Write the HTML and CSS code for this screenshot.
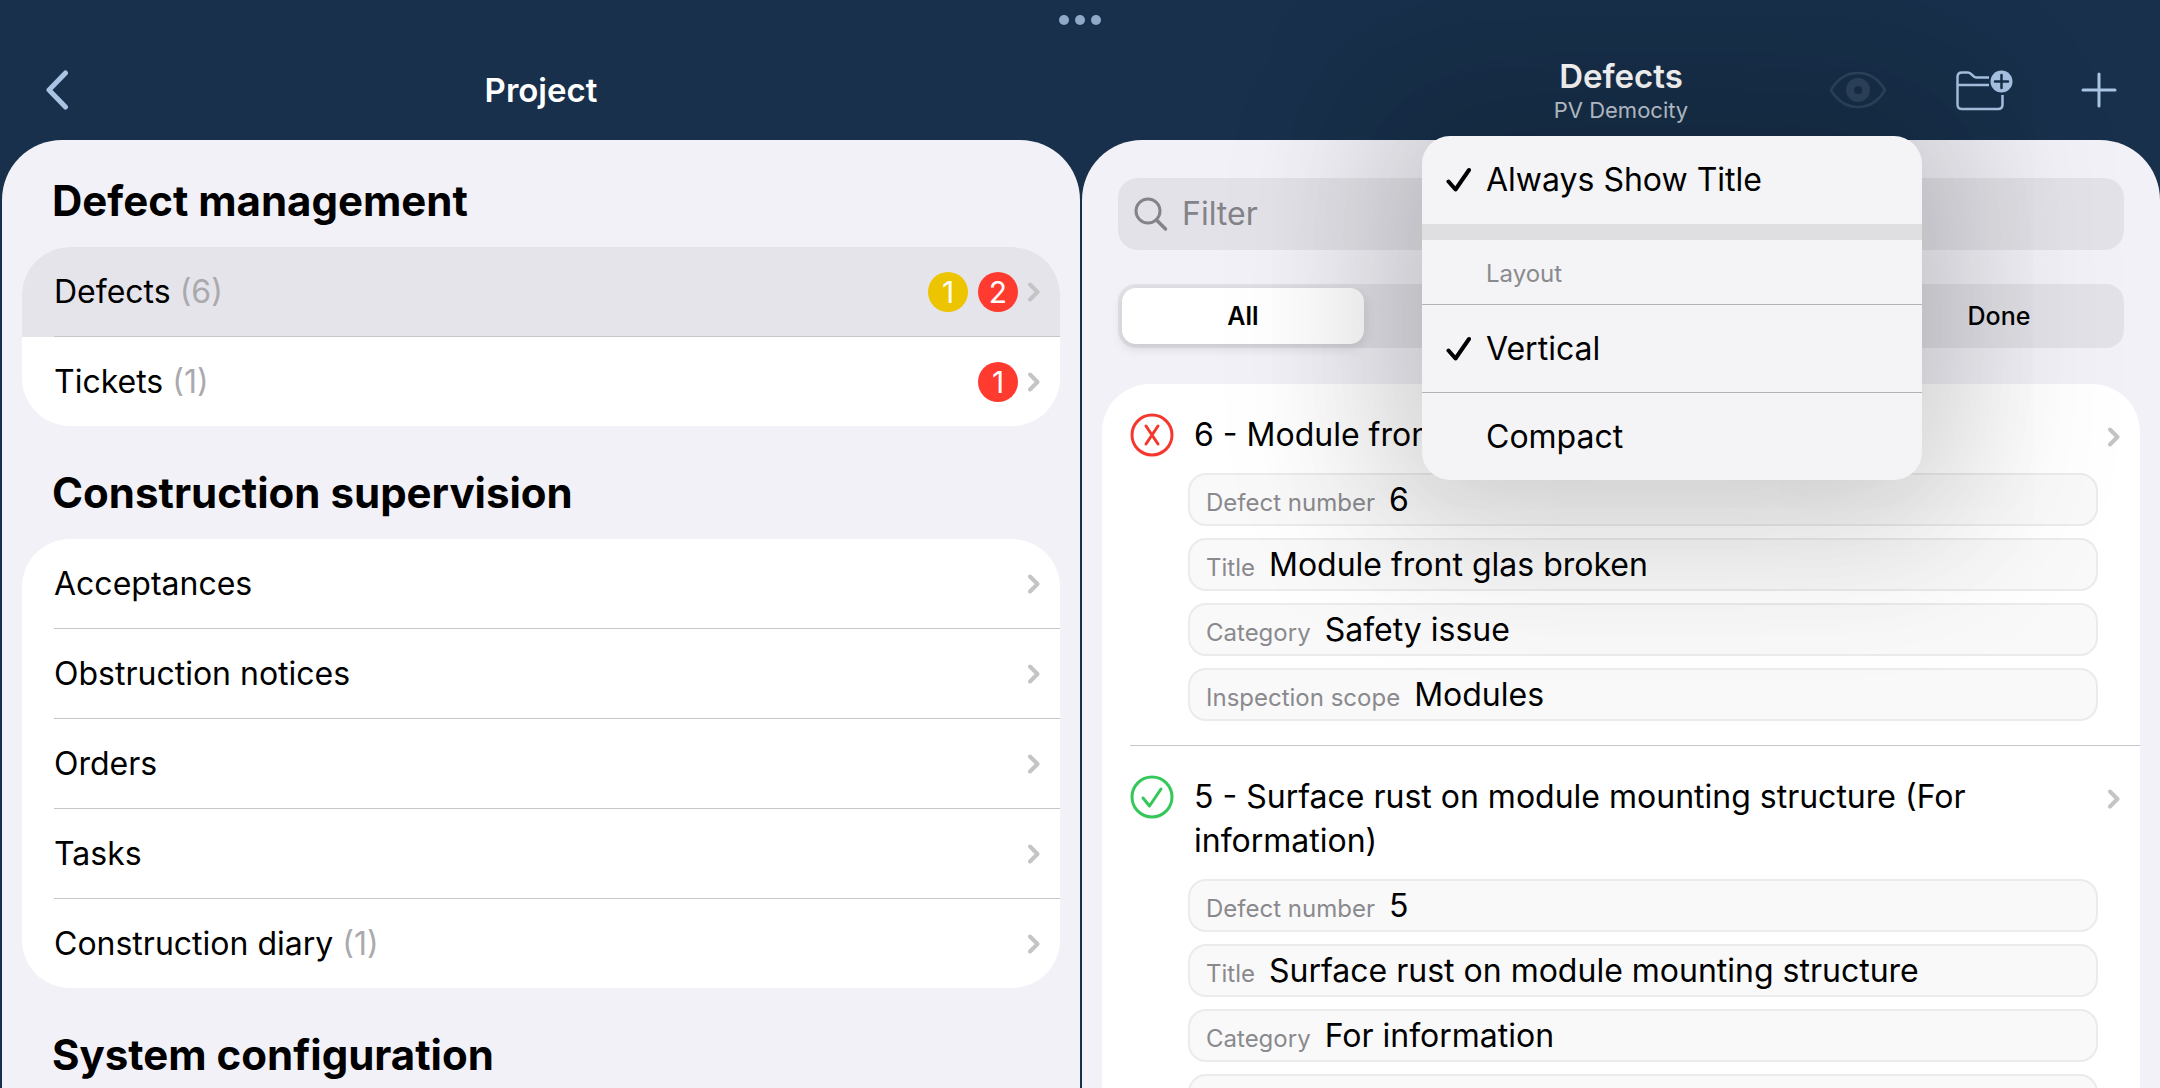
FILE: index.html
```html
<!DOCTYPE html>
<html lang="en">
<head>
    <meta charset="UTF-8">
    <meta name="viewport" content="width=device-width, initial-scale=1.0">
    <title>Project - Defects</title>
    <link rel="stylesheet" href="styles.css">
</head>
<body>
    <!-- Shared icons -->
    <svg class="icon-defs" aria-hidden="true">
        <symbol id="chevron" viewBox="0 0 12 20">
            <path d="M2 2.5 L9.5 10 L2 17.5" fill="none" stroke="currentColor" stroke-width="4" stroke-linecap="round" stroke-linejoin="round"/>
        </symbol>
        <symbol id="check" viewBox="0 0 26 26">
            <path d="M2.5 14.5 L9.5 22.5 L23 3" fill="none" stroke="currentColor" stroke-width="4" stroke-linecap="round" stroke-linejoin="round"/>
        </symbol>
    </svg>

    <div class="window-dots"><span></span><span></span><span></span></div>

    <div class="app">
        <!-- Project pane -->
        <section class="pane">
            <header class="pane-header">
                <div class="header-side">
                    <button class="icon-btn" aria-label="Back">
                        <svg width="24" height="40" viewBox="0 0 24 40"><path d="M20.500 3 L4 20 L20.500 37" fill="none" stroke="currentColor" stroke-width="5" stroke-linecap="round" stroke-linejoin="round"/></svg>
                    </button>
                </div>
                <h1 class="pane-title">Project</h1>
                <div class="header-side"></div>
            </header>

            <div class="pane-body">
                <h2 class="group-title">Defect management</h2>
                <nav class="list">
                    <a href="#" class="list-row active">
                        <span class="row-label">Defects <span class="count">(6)</span></span>
                        <span class="badge badge-yellow">1</span>
                        <span class="badge badge-red">2</span>
                        <svg class="chevron"><use href="#chevron"/></svg>
                    </a>
                    <a href="#" class="list-row">
                        <span class="row-label">Tickets <span class="count">(1)</span></span>
                        <span class="badge badge-red">1</span>
                        <svg class="chevron"><use href="#chevron"/></svg>
                    </a>
                </nav>

                <h2 class="group-title">Construction supervision</h2>
                <nav class="list">
                    <a href="#" class="list-row">
                        <span class="row-label">Acceptances</span>
                        <svg class="chevron"><use href="#chevron"/></svg>
                    </a>
                    <a href="#" class="list-row">
                        <span class="row-label">Obstruction notices</span>
                        <svg class="chevron"><use href="#chevron"/></svg>
                    </a>
                    <a href="#" class="list-row">
                        <span class="row-label">Orders</span>
                        <svg class="chevron"><use href="#chevron"/></svg>
                    </a>
                    <a href="#" class="list-row">
                        <span class="row-label">Tasks</span>
                        <svg class="chevron"><use href="#chevron"/></svg>
                    </a>
                    <a href="#" class="list-row">
                        <span class="row-label">Construction diary <span class="count">(1)</span></span>
                        <svg class="chevron"><use href="#chevron"/></svg>
                    </a>
                </nav>

                <h2 class="group-title">System configuration</h2>
            </div>
        </section>

        <!-- Defects pane -->
        <section class="pane">
            <header class="pane-header">
                <div class="header-side"></div>
                <button class="title-btn" aria-haspopup="menu" aria-expanded="true">
                    <span class="pane-title">Defects</span>
                    <span class="pane-subtitle">PV Democity</span>
                </button>
                <div class="header-side header-actions">
                    <button class="icon-btn" aria-label="Visibility" disabled>
                        <svg width="58" height="38" viewBox="0 0 58 38">
                            <path d="M2 19 C9 7 19 2 29 2 C39 2 49 7 56 19 C49 31 39 36 29 36 C19 36 9 31 2 19 Z" fill="none" stroke="currentColor" stroke-width="2.500" stroke-linejoin="round"/>
                            <circle cx="29" cy="19" r="8" fill="none" stroke="currentColor" stroke-width="8"/>
                        </svg>
                    </button>
                    <button class="icon-btn" aria-label="Add folder">
                        <svg width="58" height="42" viewBox="0 0 58 42">
                            <path d="M34 8.500 H21 C18 8.500 16.500 3.500 13 3.500 H7 Q2.500 3.500 2.500 8 V35.500 Q2.500 40 7 40 H43 Q47.500 40 47.500 35.500 V26 M2.500 16 H34" fill="none" stroke="currentColor" stroke-width="2.500"/>
                            <circle cx="46.500" cy="12.500" r="11" fill="currentColor"/>
                            <path d="M40 12.500 H53 M46.500 6 V19" stroke="#182f4a" stroke-width="2.500" stroke-linecap="round"/>
                        </svg>
                    </button>
                    <button class="icon-btn" aria-label="Add defect">
                        <svg width="36" height="36" viewBox="0 0 36 36"><path d="M2 18 H34 M18 2 V34" stroke="currentColor" stroke-width="3" stroke-linecap="round"/></svg>
                    </button>
                </div>
            </header>

            <div class="pane-body">
                <div class="toolbar">
                    <label class="search">
                        <svg width="34" height="36" viewBox="0 0 34 36"><circle cx="14" cy="15" r="12" fill="none" stroke="currentColor" stroke-width="3"/><path d="M22.500 24 L31.500 33" stroke="currentColor" stroke-width="3.500" stroke-linecap="round"/></svg>
                        <input type="text" placeholder="Filter" aria-label="Filter">
                    </label>

                    <div class="segments" role="radiogroup" aria-label="State">
                        <label class="segment"><input type="radio" name="state" checked><span>All</span></label>
                        <label class="segment segment-last"><input type="radio" name="state"><span>Done</span></label>
                    </div>
                </div>

                <div class="list">
                    <article class="defect">
                        <svg class="state state-open" viewBox="0 0 44 44"><circle cx="22" cy="22" r="20"/><path d="M16 13 L28 31 M28 13 L16 31"/></svg>
                        <a href="#" class="defect-title">6 - Module front glas broken (Safety issue)</a>
                        <svg class="chevron"><use href="#chevron"/></svg>
                        <dl class="fields">
                            <div class="field"><dt>Defect number</dt><dd>6</dd></div>
                            <div class="field"><dt>Title</dt><dd>Module front glas broken</dd></div>
                            <div class="field"><dt>Category</dt><dd>Safety issue</dd></div>
                            <div class="field"><dt>Inspection scope</dt><dd>Modules</dd></div>
                        </dl>
                    </article>
                    <article class="defect">
                        <svg class="state state-done" viewBox="0 0 44 44"><circle cx="22" cy="22" r="20"/><path d="M13 23 L19.500 31 L31 14"/></svg>
                        <a href="#" class="defect-title">5 - Surface rust on module mounting structure (For information)</a>
                        <svg class="chevron"><use href="#chevron"/></svg>
                        <dl class="fields">
                            <div class="field"><dt>Defect number</dt><dd>5</dd></div>
                            <div class="field"><dt>Title</dt><dd>Surface rust on module mounting structure</dd></div>
                            <div class="field"><dt>Category</dt><dd>For information</dd></div>
                            <div class="field"><dt>Inspection scope</dt><dd>Substructure</dd></div>
                        </dl>
                    </article>
                </div>
            </div>

            <!-- Title menu -->
            <div class="menu" role="menu">
                <button class="menu-item" role="menuitemcheckbox" aria-checked="true"><svg><use href="#check"/></svg>Always Show Title</button>
                <div class="menu-gap"></div>
                <div class="menu-heading">Layout</div>
                <button class="menu-item" role="menuitemradio" aria-checked="true"><svg><use href="#check"/></svg>Vertical</button>
                <button class="menu-item" role="menuitemradio" aria-checked="false"><svg></svg>Compact</button>
            </div>
        </section>
    </div>
</body>
</html>
```
FILE: styles.css
```css
* {
    margin: 0;
    padding: 0;
    box-sizing: border-box;
}

body {
    font-family: Inter, 'Liberation Sans', sans-serif;
    font-size: 32px;
    line-height: 44px;
    background: #18304b;
    color: #000000;
    overflow: hidden;
}

button, input {
    font: inherit;
    color: inherit;
    background: none;
    border: none;
}

a {
    color: inherit;
    text-decoration: none;
}

.icon-defs {
    position: absolute;
    width: 0;
    height: 0;
}

/* Multitasking dots over the header */
.window-dots {
    position: absolute;
    top: 15px;
    left: 0;
    right: 0;
    display: flex;
    justify-content: center;
    gap: 6px;
}

.window-dots span {
    width: 10px;
    height: 10px;
    border-radius: 50%;
    background: #8fa9c6;
}

.app {
    display: grid;
    grid-template-columns: 1fr 1fr;
    gap: 2px;
    height: 100vh;
    padding-left: 2px;
}

.pane {
    position: relative;
    display: flex;
    flex-direction: column;
    min-width: 0;
    min-height: 0;
}

/* Header */
.pane-header {
    display: grid;
    grid-template-columns: 1fr auto 1fr;
    align-items: center;
    height: 140px;
    padding: 40px 43px 0;
    flex-shrink: 0;
}

.header-actions {
    display: flex;
    justify-content: flex-end;
    align-items: center;
    gap: 68px;
}

.icon-btn {
    display: flex;
    color: #a9c4e4;
    cursor: pointer;
}

.icon-btn:disabled {
    color: #2f465f;
}

.pane-title {
    color: #ffffff;
    font-size: 33px;
    font-weight: 600;
    line-height: 40px;
}

.title-btn {
    display: flex;
    flex-direction: column;
    align-items: center;
    cursor: pointer;
}

.pane-subtitle {
    color: #c3ced9;
    font-size: 22px;
    line-height: 28px;
}

.pane-body {
    flex: 1;
    min-height: 0;
    overflow: hidden;
    padding: 0 20px;
    background: #f2f1f7;
    border-radius: 60px 60px 0 0;
}

/* Grouped lists */
.group-title {
    padding: 41px 30px 20px;
    font-size: 42px;
    font-weight: 700;
    line-height: 52px;
}

.group-title:first-child {
    padding-top: 35px;
}

.list {
    background: #ffffff;
    border-radius: 48px;
    overflow: hidden;
}

.list-row {
    display: flex;
    align-items: center;
    gap: 10px;
    height: 90px;
    padding-right: 20px;
    background: linear-gradient(#c6c6c8, #c6c6c8) 32px 100% / 100% 1px no-repeat;
}

.list-row:last-child {
    height: 89px;
    background: none;
}

.list-row.active {
    background-color: #e5e4ea;
}

.row-label {
    flex: 1;
    margin-left: 32px;
}

.count {
    color: #aaaaae;
}

.badge {
    width: 40px;
    height: 40px;
    border-radius: 50%;
    color: #ffffff;
    font-size: 30px;
    line-height: 40px;
    text-align: center;
}

.badge-yellow {
    background: #ecc500;
}

.badge-red {
    background: #ff3b30;
}

.chevron {
    width: 12px;
    height: 20px;
    color: #c4c4c7;
}

/* Filter and state switch */
.toolbar {
    display: flex;
    flex-direction: column;
    gap: 34px;
    padding: 38px 16px 36px;
}

.search {
    display: flex;
    align-items: center;
    gap: 14px;
    height: 72px;
    padding: 0 16px;
    border-radius: 20px;
    background: #e3e2e8;
    color: #838388;
}

.search input {
    flex: 1;
    min-width: 0;
    outline: none;
}

.search input::placeholder {
    color: #838388;
    opacity: 1;
}

.segments {
    display: grid;
    grid-template-columns: repeat(4, 1fr);
    gap: 10px;
    height: 64px;
    padding: 4px;
    border-radius: 18px;
    background: #e3e2e8;
}

.segment {
    position: relative;
    cursor: pointer;
}

.segment-last {
    grid-column: 4;
}

.segment input {
    position: absolute;
    opacity: 0;
}

.segment span {
    display: block;
    border-radius: 14px;
    font-size: 25px;
    font-weight: 500;
    line-height: 56px;
    text-align: center;
}

.segment input:checked + span {
    background: #ffffff;
    font-weight: 600;
    box-shadow: 0 4px 12px rgba(0, 0, 0, 0.12);
}

/* Defect entries */
.defect {
    display: grid;
    grid-template-columns: 44px 1fr 12px;
    column-gap: 20px;
    margin-left: 28px;
    padding: 29px 20px 24px 0;
    border-bottom: 1px solid #c6c6c8;
}

.defect-title {
    padding-right: 60px;
}

.defect .chevron {
    margin-top: 14px;
}

.state {
    width: 44px;
    height: 44px;
    fill: none;
    stroke: currentColor;
    stroke-width: 3;
    stroke-linecap: round;
    stroke-linejoin: round;
}

.state-open {
    color: #f5382e;
}

.state-done {
    color: #34c759;
}

.fields {
    grid-column: 1 / -1;
    display: flex;
    flex-direction: column;
    gap: 12px;
    margin: 16px 22px 0 58px;
}

.field {
    display: flex;
    align-items: baseline;
    gap: 14px;
    height: 53px;
    padding: 3px 16px;
    border: 2px solid #ebebec;
    border-radius: 18px;
    background: #f9f9f9;
}

.field dt {
    color: #8a8a8e;
    font-size: 24px;
}

/* Popup menu */
.menu {
    position: absolute;
    top: 136px;
    right: 238px;
    width: 500px;
    border-radius: 28px;
    background: #f4f4f6;
    overflow: hidden;
    box-shadow: 0 0 150px 10px rgba(0, 0, 0, 0.15), 0 0 150px 80px rgba(0, 0, 0, 0.08);
}

.menu-item {
    display: flex;
    align-items: center;
    gap: 14px;
    width: 100%;
    height: 88px;
    padding: 0 24px;
    text-align: left;
    cursor: pointer;
}

.menu-item svg {
    width: 26px;
    height: 26px;
}

.menu-gap {
    height: 16px;
    background: #dfdfe1;
}

.menu-heading {
    padding: 12px 64px 8px;
    color: #8a8a8e;
    font-size: 24px;
}

.menu-heading ~ .menu-item {
    border-top: 1px solid #b4b4b8;
}
```
